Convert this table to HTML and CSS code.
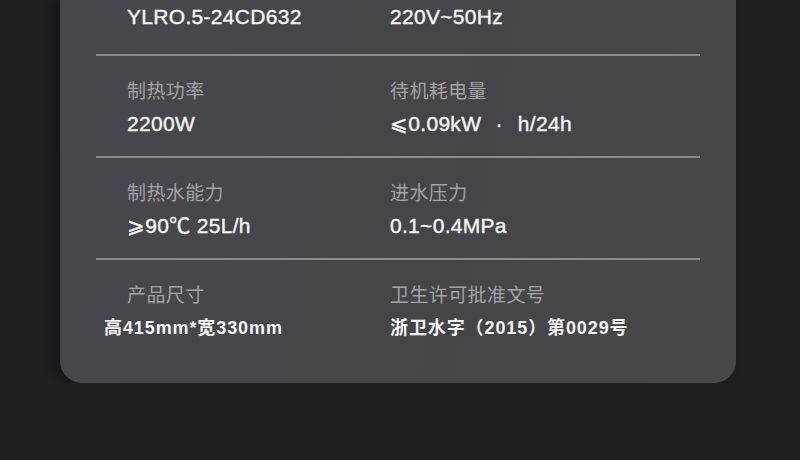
FILE: index.html
```html
<!DOCTYPE html>
<html lang="zh-CN">
<head>
  <meta charset="UTF-8" />
  <meta name="viewport" content="width=device-width, initial-scale=1" />
  <title>产品参数</title>
  <link rel="stylesheet" href="styles.css">
</head>
<body>

  <!-- === Spec card === -->
  <div class="card">
    <div class="row first">
      <div class="cell">
        <div class="value">YLRO.5-24CD632</div>
      </div>
      <div class="cell">
        <div class="value">220V~50Hz</div>
      </div>
    </div>

    <div class="row">
      <div class="cell">
        <div class="label">制热功率</div>
        <div class="value">2200W</div>
      </div>
      <div class="cell">
        <div class="label">待机耗电量</div>
        <div class="value">⩽0.09kW <span class="dot">·</span> h/24h</div>
      </div>
    </div>

    <div class="row">
      <div class="cell">
        <div class="label">制热水能力</div>
        <div class="value">⩾90℃ 25L/h</div>
      </div>
      <div class="cell">
        <div class="label">进水压力</div>
        <div class="value">0.1~0.4MPa</div>
      </div>
    </div>

    <div class="row last">
      <div class="cell">
        <div class="label">产品尺寸</div>
        <div class="value small shift">高415mm*宽330mm</div>
      </div>
      <div class="cell">
        <div class="label">卫生许可批准文号</div>
        <div class="value small">浙卫水字（2015）第0029号</div>
      </div>
    </div>
  </div>

</body>
</html>
```

FILE: styles.css
```css
body {
  background: #1f1e23;
  color: #f3f3f3;
  font-family: 'Liberation Sans', 'Noto Sans CJK SC', sans-serif;
  margin: 0;
  padding: 0;
  overflow: hidden;
}

/* === Card === */
.card {
  width: 604px;
  margin: 0 0 0 60px;
  padding: 0 36px;
  background: linear-gradient(100deg, #48474d 0%, #454449 60%, #48474c 100%);
  border-radius: 0 0 22px 22px;
  box-shadow: -6px 0 10px rgba(0, 0, 0, 0.25);
}

.row {
  display: grid;
  grid-template-columns: 263px 1fr;
  padding: 24px 0 18px 31px;
  border-bottom: 2px solid #8a898e;
}

.row.first {
  padding-top: 3px;
  padding-bottom: 23px;
}

.row.last {
  border-bottom: none;
  padding-bottom: 41px;
}

.label {
  font-size: 19px;
  line-height: 24px;
  letter-spacing: 0.4px;
  color: #a3a2a7;
  margin-bottom: 6px;
}

.value {
  font-size: 21px;
  line-height: 28px;
  letter-spacing: 0.3px;
  color: #f5f5f5;
  -webkit-text-stroke: 0.4px #f5f5f5;
}

.dot {
  margin: 0 9px 0 8px;
}

.value.small {
  font-size: 18px;
  font-weight: bold;
  letter-spacing: 0.9px;
  -webkit-text-stroke: 0;
}

.value.shift {
  margin-left: -23px;
}
```
